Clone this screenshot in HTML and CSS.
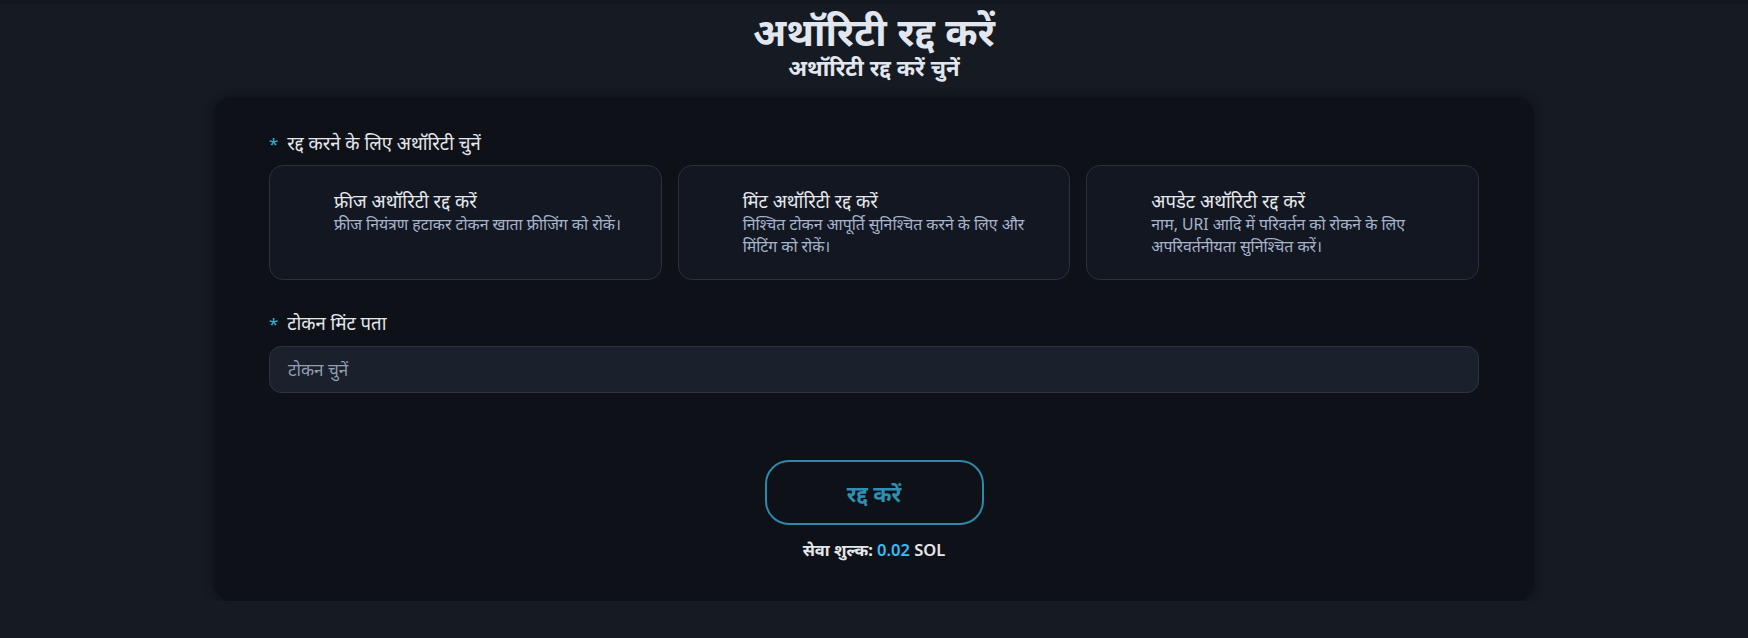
FILE: index.html
```html
<!DOCTYPE html>
<html lang="hi">
<head>
    <meta charset="UTF-8">
    <meta name="viewport" content="width=device-width, initial-scale=1.0">
    <title>अथॉरिटी रद्द करें</title>
    <link rel="stylesheet" href="styles.css">
</head>
<body>
    <div class="page">
        <div class="header">
            <h1 class="title">अथॉरिटी रद्द करें</h1>
            <h2 class="subtitle">अथॉरिटी रद्द करें चुनें</h2>
        </div>

        <div class="panel">
            <div class="field">
                <label class="field-label"><span class="req">*</span> रद्द करने के लिए अथॉरिटी चुनें</label>
                <div class="options">
                    <div class="option">
                        <div class="option-title">फ्रीज अथॉरिटी रद्द करें</div>
                        <div class="option-desc">फ्रीज नियंत्रण हटाकर टोकन खाता फ्रीजिंग को रोकें।</div>
                    </div>
                    <div class="option">
                        <div class="option-title">मिंट अथॉरिटी रद्द करें</div>
                        <div class="option-desc">निश्चित टोकन आपूर्ति सुनिश्चित करने के लिए और मिंटिंग को रोकें।</div>
                    </div>
                    <div class="option">
                        <div class="option-title">अपडेट अथॉरिटी रद्द करें</div>
                        <div class="option-desc">नाम, URI आदि में परिवर्तन को रोकने के लिए अपरिवर्तनीयता सुनिश्चित करें।</div>
                    </div>
                </div>
            </div>

            <div class="field">
                <label class="field-label"><span class="req">*</span> टोकन मिंट पता</label>
                <div class="select-box">टोकन चुनें</div>
            </div>

            <div class="actions">
                <button type="button" class="button">रद्द करें</button>
                <div class="fee">सेवा शुल्क: <span class="fee-amount">0.02</span> <span class="fee-unit">SOL</span></div>
            </div>
        </div>
    </div>
</body>
</html>
```

FILE: styles.css
```css
* {
    margin: 0;
    padding: 0;
    box-sizing: border-box;
}

body {
    font-family: 'Noto Sans', 'Open Sans', sans-serif;
    background-color: #151a23;
    color: #e5e7eb;
    border-top: 4px solid #131720;
}

.page {
    display: flex;
    flex-direction: column;
    align-items: center;
}

.header {
    text-align: center;
    padding-top: 7px;
    font-family: 'Liberation Sans', 'Noto Sans', sans-serif;
}

.title {
    font-size: 39px;
    font-weight: bold;
    line-height: 44px;
    color: #e2e6ee;
}

.subtitle {
    font-size: 22px;
    font-weight: bold;
    line-height: 28px;
    color: #e2e6ee;
}

.panel {
    width: 1320px;
    margin-top: 14px;
    background-color: #0f1119;
    border-radius: 18px;
    box-shadow: 0 0 10px rgba(10, 12, 18, 0.6);
    padding: 33px 55px 40px;
    display: flex;
    flex-direction: column;
    gap: 30px;
}

.field {
    display: flex;
    flex-direction: column;
    gap: 8px;
}

.field + .field .field-label {
    margin-bottom: 1px;
}

.field-label {
    font-size: 18.5px;
    color: #e5e7eb;
    line-height: 26px;
}

.req {
    color: #38b2d8;
    font-size: 17px;
    margin-right: 4px;
}

.options {
    display: grid;
    grid-template-columns: repeat(3, 1fr);
    gap: 16px;
}

.option {
    border: 1px solid #2a303c;
    border-radius: 14px;
    background-color: #121722;
    height: 115px;
    padding: 23px 20px 0 64px;
}

.option-title {
    font-size: 18.5px;
    line-height: 24px;
    color: #e5e7eb;
}

.option-desc {
    font-size: 15.8px;
    line-height: 22px;
    color: #a7b3ca;
    max-width: 300px;
}

.select-box {
    border: 1px solid #2b3341;
    border-radius: 12px;
    background-color: #1a212c;
    height: 47px;
    padding: 0 18px;
    display: flex;
    align-items: center;
    font-size: 17px;
    color: #939db0;
}

.actions {
    display: flex;
    flex-direction: column;
    align-items: center;
    gap: 14px;
    margin-top: 37px;
}

.button {
    width: 219px;
    height: 65px;
    border: 2px solid #2b8aa7;
    border-radius: 24px;
    background: transparent;
    color: #2f8fb0;
    font-family: inherit;
    font-size: 22px;
    font-weight: bold;
    cursor: pointer;
}

.fee {
    font-size: 16.5px;
    line-height: 22px;
    font-weight: bold;
    color: #e5e7eb;
}

.fee-amount {
    color: #38bdf8;
    font-weight: 600;
}

.fee-unit {
    font-weight: 600;
}
```
